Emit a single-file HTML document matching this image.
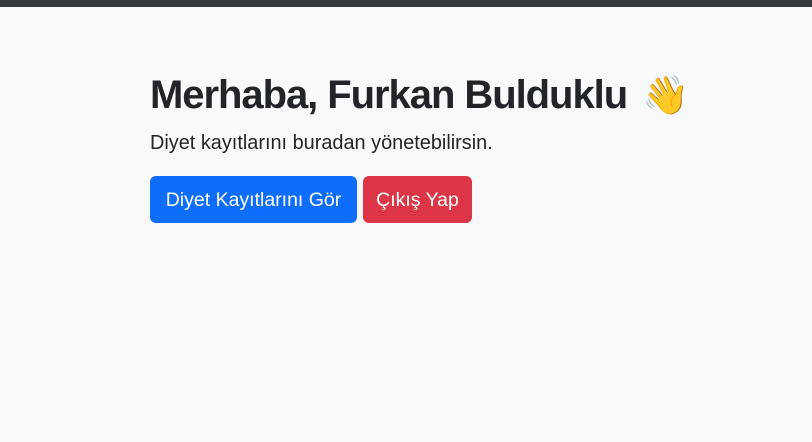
<!DOCTYPE html>
<html><head><meta charset="utf-8"><style>
body{margin:0;background:#f8f9fa;font-family:"Liberation Sans","DejaVu Sans",sans-serif;color:#212529;width:812px;height:442px;overflow:hidden;position:relative}
.bar{position:absolute;top:0;left:0;width:812px;height:7px;background:#343a40}
h1{position:absolute;left:150px;top:69px;margin:0;font-size:40px;font-weight:bold;line-height:52px;white-space:nowrap;letter-spacing:-1.05px}
p{position:absolute;left:150px;top:130px;margin:0;font-size:19.9px;line-height:26px;white-space:nowrap}
.btn{position:absolute;top:176px;height:47px;border-radius:6px;color:#fff;font-size:19.5px;line-height:49px;text-align:center;white-space:nowrap}
</style></head><body>
<div class="bar"></div>
<h1>Merhaba, Furkan Bulduklu <span style="font-size:38px;font-weight:normal;letter-spacing:0;margin-left:5px">👋</span></h1>
<p>Diyet kayıtlarını buradan yönetebilirsin.</p>
<div class="btn" style="left:150px;width:207px;background:#0d6efd">Diyet Kayıtlarını Gör</div>
<div class="btn" style="left:363px;width:109px;background:#dc3545">Çıkış Yap</div>
</body></html>
